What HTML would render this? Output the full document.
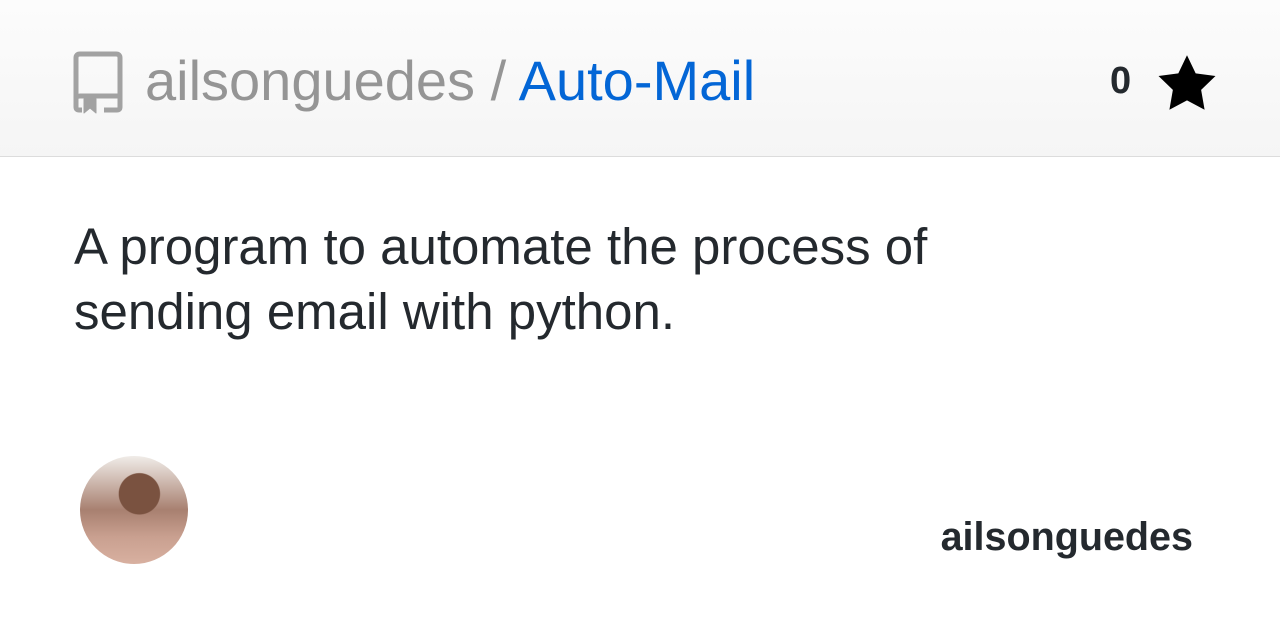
<!DOCTYPE html>
<html><head><style>
body{margin:0;width:1280px;height:640px;overflow:hidden;background:#fff;font-family:"Liberation Sans",Arial,sans-serif;position:relative}
.hdr{position:absolute;left:0;top:0;width:1280px;height:156px;background:linear-gradient(#fcfcfc,#f5f5f5);border-bottom:1px solid #dcdcdc}
.title{position:absolute;left:145px;top:48px;font-size:56px;color:#959595;white-space:nowrap}
.title b{font-weight:normal;color:#0366d6}
.cnt{position:absolute;left:1110px;top:60px;font-size:38px;font-weight:bold;color:#24292e}
.desc{position:absolute;left:74px;top:214px;font-size:51px;line-height:65px;color:#24292e;width:1000px}
.user{position:absolute;right:87px;top:515px;font-size:39.5px;font-weight:bold;color:#24292e}
.av{position:absolute;left:80px;top:456px;width:108px;height:108px;border-radius:50%;background:radial-gradient(circle at 55% 35%,#7a5240 0 22%,transparent 23%),linear-gradient(#f0ece8 0%,#a88070 50%,#c9a090 75%,#d8b0a0 100%)}
</style></head><body>
<div class="hdr">
<svg style="position:absolute;left:72px;top:51px" width="52" height="64" viewBox="0 0 52 64" fill="none" stroke="#a2a2a2" stroke-width="5" stroke-linejoin="round">
<path d="M4 48V7Q4 3 8 3H44Q48 3 48 7V56Q48 59 45 59H32"/>
<path d="M4 48Q4 45 8 45H48"/>
<path d="M4 48V56Q4 59 7 59H10"/>
<path d="M12 48H24V62L18 57L12 62Z" fill="#a2a2a2" stroke-width="1"/>
</svg>
<div class="title">ailsonguedes / <b>Auto-Mail</b></div>
<div class="cnt">0</div>
<svg style="position:absolute;left:1157px;top:54px" width="60" height="57" viewBox="0 0 24 23"><path d="M12 0.5l3.5 7.3 8 1.1-5.8 5.6 1.4 8L12 18.7 4.9 22.5l1.4-8L0.5 8.9l8-1.1z" fill="#000"/></svg>
</div>
<div class="desc">A program to automate the process of<br>sending email with python.</div>
<div class="av"></div>
<div class="user">ailsonguedes</div>
</body></html>
